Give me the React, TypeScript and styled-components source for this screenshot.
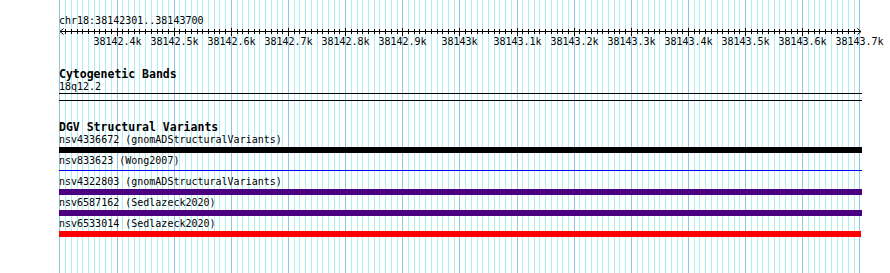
import React from "react";
import styled, { createGlobalStyle } from "styled-components";

const GlobalStyle = createGlobalStyle`
  html, body { margin: 0; padding: 0; background: #ffffff; }
  body { font-family: "DejaVu Sans Mono", "Liberation Mono", monospace; }
`;

const VIEW_START = 38142300;
const VIEW_END = 38143700;
const ORIGIN_X = 59.4;
const PX_PER_BP = 800 / (VIEW_END - VIEW_START);
const CONTENT_LEFT = 59;

const bpToX = (bp: number) => Math.round(ORIGIN_X + (bp - VIEW_START) * PX_PER_BP);

const Page = styled.div`
  position: relative;
  width: 890px;
  height: 273px;
  overflow: hidden;
  background: #ffffff;
`;

const GridLayer = styled.svg`
  position: absolute;
  left: 0;
  top: 0;
  z-index: 0;
`;

const Content = styled.div`
  position: relative;
  z-index: 1;
  display: flex;
  flex-direction: column;
  padding-left: ${CONTENT_LEFT}px;
  width: 803px;
`;

const LocationLabel = styled.div`
  margin-top: 15px;
  font-size: 10px;
  line-height: 12px;
  color: #000;
  white-space: nowrap;
`;

const RulerSvg = styled.svg`
  display: block;
  overflow: visible;
`;

const Track = styled.section<{ $gap: number }>`
  display: flex;
  flex-direction: column;
  margin-top: ${(p) => p.$gap}px;
`;

const TrackTitle = styled.div`
  font-size: 11.5px;
  font-weight: bold;
  line-height: 13px;
  color: #000;
  white-space: nowrap;
`;

const FeatureLabel = styled.div`
  font-size: 10px;
  line-height: 12px;
  color: #000;
  white-space: nowrap;
`;

const BandBox = styled.div`
  box-sizing: border-box;
  height: 8px;
  width: 803px;
  border-top: 1px solid #000;
  border-bottom: 1px solid #000;
`;

const FeatureRow = styled.div`
  display: flex;
  flex-direction: column;
  height: 21px;
`;

const BarLane = styled.div`
  position: relative;
  height: 6px;
  margin-top: 1px;
  display: flex;
  align-items: flex-start;
`;

const Bar = styled.div<{ $color: string; $thin?: boolean }>`
  height: ${(p) => (p.$thin ? 1 : 6)}px;
  margin-top: ${(p) => (p.$thin ? 2 : 0)}px;
  background: ${(p) => p.$color};
`;

function Grid() {
  const lines = [];
  for (let i = 0; i <= 140; i++) {
    const x = bpToX(VIEW_START + i * 10);
    const major = i % 10 === 0;
    lines.push(
      <rect
        key={i}
        x={x}
        y={0}
        width={1}
        height={273}
        fill={major ? "#8fc5e6" : "#adeef2"}
      />
    );
  }
  return (
    <GridLayer width={890} height={273}>
      {lines}
    </GridLayer>
  );
}

function Ruler() {
  const ticks = [];
  const labels = [];
  for (let i = 0; i <= 140; i++) {
    const bp = VIEW_START + i * 10;
    const x = bpToX(bp) - CONTENT_LEFT + 0.5;
    const major = i % 10 === 0;
    if (i > 0 && i < 140) {
      ticks.push(
        <line
          key={"t" + i}
          x1={x}
          x2={x}
          y1={major ? 1 : 2}
          y2={major ? 9 : 7}
          stroke="#000"
          strokeWidth={1}
        />
      );
    }
    if (major && i > 0) {
      const k = bp / 1000;
      const txt = (Number.isInteger(k) ? k.toString() : k.toFixed(1)) + "k";
      labels.push(
        <text
          key={"l" + i}
          x={x}
          y={17.5}
          textAnchor="middle"
          fontSize={10}
          fontFamily='"DejaVu Sans Mono", "Liberation Mono", monospace'
          fill="#000"
        >
          {txt}
        </text>
      );
    }
  }
  return (
    <RulerSvg width={803} height={20}>
      <line x1={1} x2={802} y1={4.5} y2={4.5} stroke="#000" strokeWidth={1} />
      <polyline points="4.5,1.5 1,4.5 4.5,7.5" fill="none" stroke="#000" strokeWidth={1} />
      <polyline points="798.5,1.5 802,4.5 798.5,7.5" fill="none" stroke="#000" strokeWidth={1} />
      {ticks}
      {labels}
    </RulerSvg>
  );
}

type Feature = {
  name: string;
  source: string;
  color: string;
  thin?: boolean;
  width: number;
};

const features: Feature[] = [
  { name: "nsv4336672", source: "gnomADStructuralVariants", color: "#000000", width: 803 },
  { name: "nsv833623", source: "Wong2007", color: "#0000ff", thin: true, width: 803 },
  { name: "nsv4322803", source: "gnomADStructuralVariants", color: "#4b0082", width: 803 },
  { name: "nsv6587162", source: "Sedlazeck2020", color: "#4b0082", width: 803 },
  { name: "nsv6533014", source: "Sedlazeck2020", color: "#ff0000", width: 802 },
];

export default function App() {
  return (
    <>
      <GlobalStyle />
      <Page>
        <Grid />
        <Content>
          <LocationLabel>chr18:38142301..38143700</LocationLabel>
          <Ruler />
          <Track $gap={21}>
            <TrackTitle>Cytogenetic Bands</TrackTitle>
            <FeatureLabel>18q12.2</FeatureLabel>
            <BandBox />
          </Track>
          <Track $gap={20}>
            <TrackTitle>DGV Structural Variants</TrackTitle>
            {features.map((f) => (
              <FeatureRow key={f.name}>
                <FeatureLabel>
                  {f.name} ({f.source})
                </FeatureLabel>
                <BarLane>
                  <Bar $color={f.color} $thin={f.thin} style={{ width: f.width }} />
                </BarLane>
              </FeatureRow>
            ))}
          </Track>
        </Content>
      </Page>
    </>
  );
}
